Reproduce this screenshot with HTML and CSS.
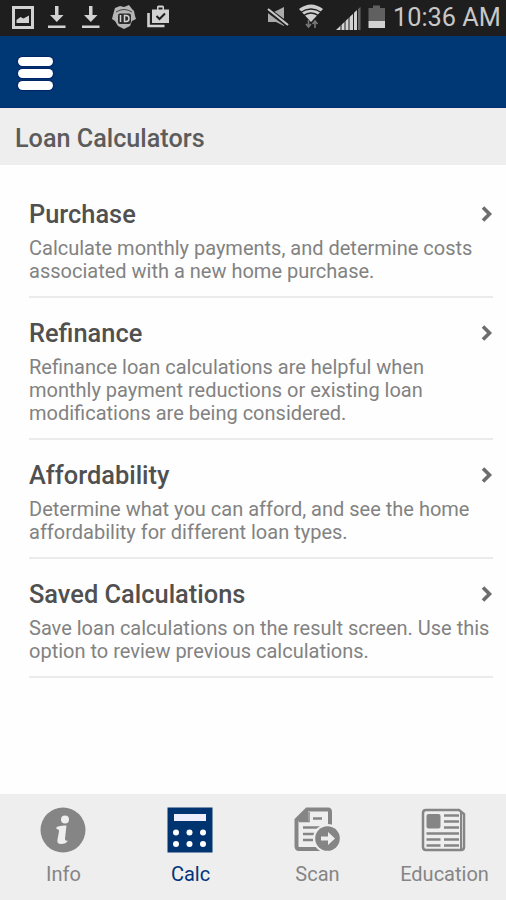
FILE: index.html
```html
<!DOCTYPE html>
<html lang="en">
<head>
<meta charset="utf-8">
<title>Loan Calculators</title>
<link rel="stylesheet" href="styles.css">
</head>
<body>
<div class="status">
  <svg class="status-left" width="180" height="36" viewBox="0 0 180 36">
    <path d="M13.500 7.500h19v20h-19z" fill="none" stroke="#d2d2d2" stroke-width="3"/>
    <path d="M16.500 23v-3l4-3 3 1.500 5.500-3V23z" fill="#d2d2d2"/>
    <g fill="#d2d2d2"><path id="dl" d="M55 6h3.500v9h5l-6.700 7-6.800-7h5zM48 25.500h17.500v2.500H48z"/><use href="#dl" x="34"/></g>
    <path d="M115 8l5-2 4 1 5-2 3 4 2 2 1 5 1 3-4 2-2 5-6 3-6-3-3-5-3-2 1-4z" fill="#b5b5b5"/>
    <path d="M116 12q8-5 16 0" fill="none" stroke="#444" stroke-width="1"/>
    <rect x="118" y="13.500" width="13" height="10.500" rx="2" fill="#2c2c2c"/>
    <path d="M120.500 15v7M124.500 15.500v6h1.500q3 0 3-3t-3-3z" fill="none" stroke="#d2d2d2" stroke-width="1.500"/>
    <path d="M148.500 13v13h16" fill="none" stroke="#d2d2d2" stroke-width="2.600"/>
    <path d="M152 9.500h5V7q0-1.500 1.500-1.500h4Q164 5.500 164 7v2.500h5V23h-17z" fill="#d2d2d2"/>
    <path d="M158.500 7.500h4v2h-4z" fill="#1e1e1e"/><path d="M156.500 16l3 3 5.500-5.500" fill="none" stroke="#1e1e1e" stroke-width="2"/>
  </svg>
  <svg class="status-right" width="124" height="36" viewBox="266 0 124 36">
    <path d="M268 12h6l10-5v19l-8-4h-8z" fill="#aaa"/>
    <path d="M268 10l20 15" stroke="#1e1e1e" stroke-width="5"/><path d="M268 9l20 16" stroke="#c8c8c8" stroke-width="2.200"/>
    <path d="M299 9q12-9 24 0L311 22z" fill="#cecece"/>
    <path d="M300.500 12.500q10.500-7 21 0M303 16q8-6 16 0" fill="none" stroke="#1e1e1e" stroke-width="1.300"/>
    <path d="M308.500 20v7M306 24l2.500 3 2.500-3M315 28v-7M312.500 24l2.500-3 2.500 3" fill="none" stroke="#777" stroke-width="1.600"/>
    <path d="M336 30l21-20v20z" fill="#d2d2d2"/><path d="M341 24v6M345 20v10M349 16v14M353.500 12v18" stroke="#1e1e1e" stroke-width="1"/><path d="M358 9l2.500-2v23H358z" fill="#666"/>
    <path d="M368.500 8h4.500V5.500h7V8h5v13h-16.500z" fill="#606060"/><path d="M368.500 21H385v7h-16.500z" fill="#d2d2d2"/>
  </svg>
  <span class="clock">10:36 AM</span>
</div>
<header class="appbar"><div class="menu"><i></i><i></i><i></i></div></header>
<h1 class="heading">Loan Calculators</h1>
<main class="list">
  <section class="item">
    <div class="row"><h2>Purchase</h2><svg class="chev" width="12" height="18" viewBox="0 0 12 18"><path d="M2 2.500L8.500 9 2 15.500"/></svg></div>
    <p>Calculate monthly payments, and determine costs<br>associated with a new home purchase.</p>
  </section>
  <section class="item">
    <div class="row"><h2>Refinance</h2><svg class="chev" width="12" height="18" viewBox="0 0 12 18"><path d="M2 2.500L8.500 9 2 15.500"/></svg></div>
    <p>Refinance loan calculations are helpful when<br>monthly payment reductions or existing loan<br>modifications are being considered.</p>
  </section>
  <section class="item">
    <div class="row"><h2>Affordability</h2><svg class="chev" width="12" height="18" viewBox="0 0 12 18"><path d="M2 2.500L8.500 9 2 15.500"/></svg></div>
    <p>Determine what you can afford, and see the home<br>affordability for different loan types.</p>
  </section>
  <section class="item">
    <div class="row"><h2>Saved Calculations</h2><svg class="chev" width="12" height="18" viewBox="0 0 12 18"><path d="M2 2.500L8.500 9 2 15.500"/></svg></div>
    <p>Save loan calculations on the result screen. Use this<br>option to review previous calculations.</p>
  </section>
</main>
<nav class="tabs">
  <div class="tab">
    <svg width="46" height="46" viewBox="0 0 46 46"><circle cx="23" cy="23" r="22.500" fill="#858585"/><circle cx="25" cy="12.500" r="4" fill="#eee"/><path d="M16.500 20q4-2 10-1.500L25 31.500q-.3 3.200 3 2-2 3.500-7 3.500-4.500 0-3.500-4.500l1.500-8q.3-2.500-2.500-2.500z" fill="#eee"/></svg>
    <span>Info</span>
  </div>
  <div class="tab active">
    <svg width="46" height="46" viewBox="0 0 46 46"><path d="M.5.500h45v45H.5z" fill="#003471"/><path d="M7 7h32v7H7z" fill="#eef"/><g fill="#fff"><circle cx="9" cy="25.500" r="3"/><circle cx="22.500" cy="25.500" r="3"/><circle cx="36" cy="25.500" r="3"/><circle cx="9" cy="37" r="3"/><circle cx="22.500" cy="37" r="3"/><circle cx="36" cy="37" r="3"/></g></svg>
    <span>Calc</span>
  </div>
  <div class="tab">
    <svg width="46" height="46" viewBox="0 0 46 46"><path d="M2.500 13L13 2.500h21Q36 2.500 36 5v37H5q-2.500 0-2.500-3z" fill="#eee" stroke="#858585" stroke-width="4"/><path d="M2 14L14 2v12z" fill="#858585"/><path d="M15 5v9.500H5" fill="none" stroke="#858585" stroke-width="1.500"/><path d="M19 11.500h9M9 20.500h18M9 27h12M9 33h10" stroke="#858585" stroke-width="2.600"/><circle cx="33.500" cy="31.500" r="14.500" fill="#eee"/><circle cx="33.500" cy="31.500" r="12.300" fill="#858585"/><path d="M27 29.500h7V25l7 6.500-7 6.500v-4.500h-7z" fill="#eee"/></svg>
    <span>Scan</span>
  </div>
  <div class="tab">
    <svg width="46" height="46" viewBox="0 0 46 46"><path d="M5 3h33l5 4v33q0 3-3 3H5q-3 0-3-3V6q0-3 3-3z" fill="#eee" stroke="#858585" stroke-width="2.500"/><path d="M40 5v37" stroke="#858585" stroke-width="2"/><rect x="5.500" y="7" width="14" height="14.500" rx="2" fill="#858585"/><path d="M23 8.500H38M23 14.500H38M23 20.500H38M5.500 26.500H38M5.500 32.500H19.500M23 32.500H38M5.500 38.500H19.500M23 38.500H38" stroke="#858585" stroke-width="2.300"/></svg>
    <span>Education</span>
  </div>
</nav>
</body>
</html>
```
FILE: styles.css
```css
* { box-sizing: border-box; }
body { margin: 0; width: 506px; height: 900px; display: flex; flex-direction: column; background: #fefefe; font-family: Roboto, sans-serif; overflow: hidden; }
svg { display: block; flex: none; }
.status { height: 36px; background: #1e1e1e; display: flex; align-items: center; }
.status-right { margin-left: 86px; }
.clock { margin-left: 3px; color: #c8c8c8; font-size: 25.3px; line-height: 36px; white-space: nowrap; }
.appbar { height: 72px; background: #003775; border-bottom: 1px solid #002c72; padding: 21px 18px; }
.menu { width: 35px; display: flex; flex-direction: column; gap: 3px; }
.menu i { height: 9px; border-radius: 5px; background: #fff; box-shadow: 0 0 1px 1px #002568; }
.heading { margin: 0; height: 57px; padding-left: 15px; background: #eee; color: #5c5c5c; font-size: 25.2px; line-height: 61px; font-weight: 500; }
.list { flex: 1; padding: 35px 13px 0 29px; }
.item { border-bottom: 2px solid #ebebeb; padding-bottom: 13px; margin-bottom: 21px; }
.row { display: flex; justify-content: space-between; align-items: flex-start; height: 30px; }
h2 { margin: 0; font-size: 25.4px; line-height: 29px; font-weight: 500; color: #505050; white-space: nowrap; }
p { margin: 7px 0 0; font-size: 20px; line-height: 23px; color: #828282; white-space: nowrap; }
.chev { margin-top: 5px; }
.chev path { fill: none; stroke: #6d6d6d; stroke-width: 3.6; }
.tabs { height: 106px; background: #eee; display: grid; grid-template-columns: repeat(4, 127px); padding-top: 13px; }
.tab { display: flex; flex-direction: column; align-items: center; gap: 9px; color: #858585; font-size: 20px; line-height: 24px; }
.tab svg { margin-right: 2px; }
.active { color: #00347a; }
```
